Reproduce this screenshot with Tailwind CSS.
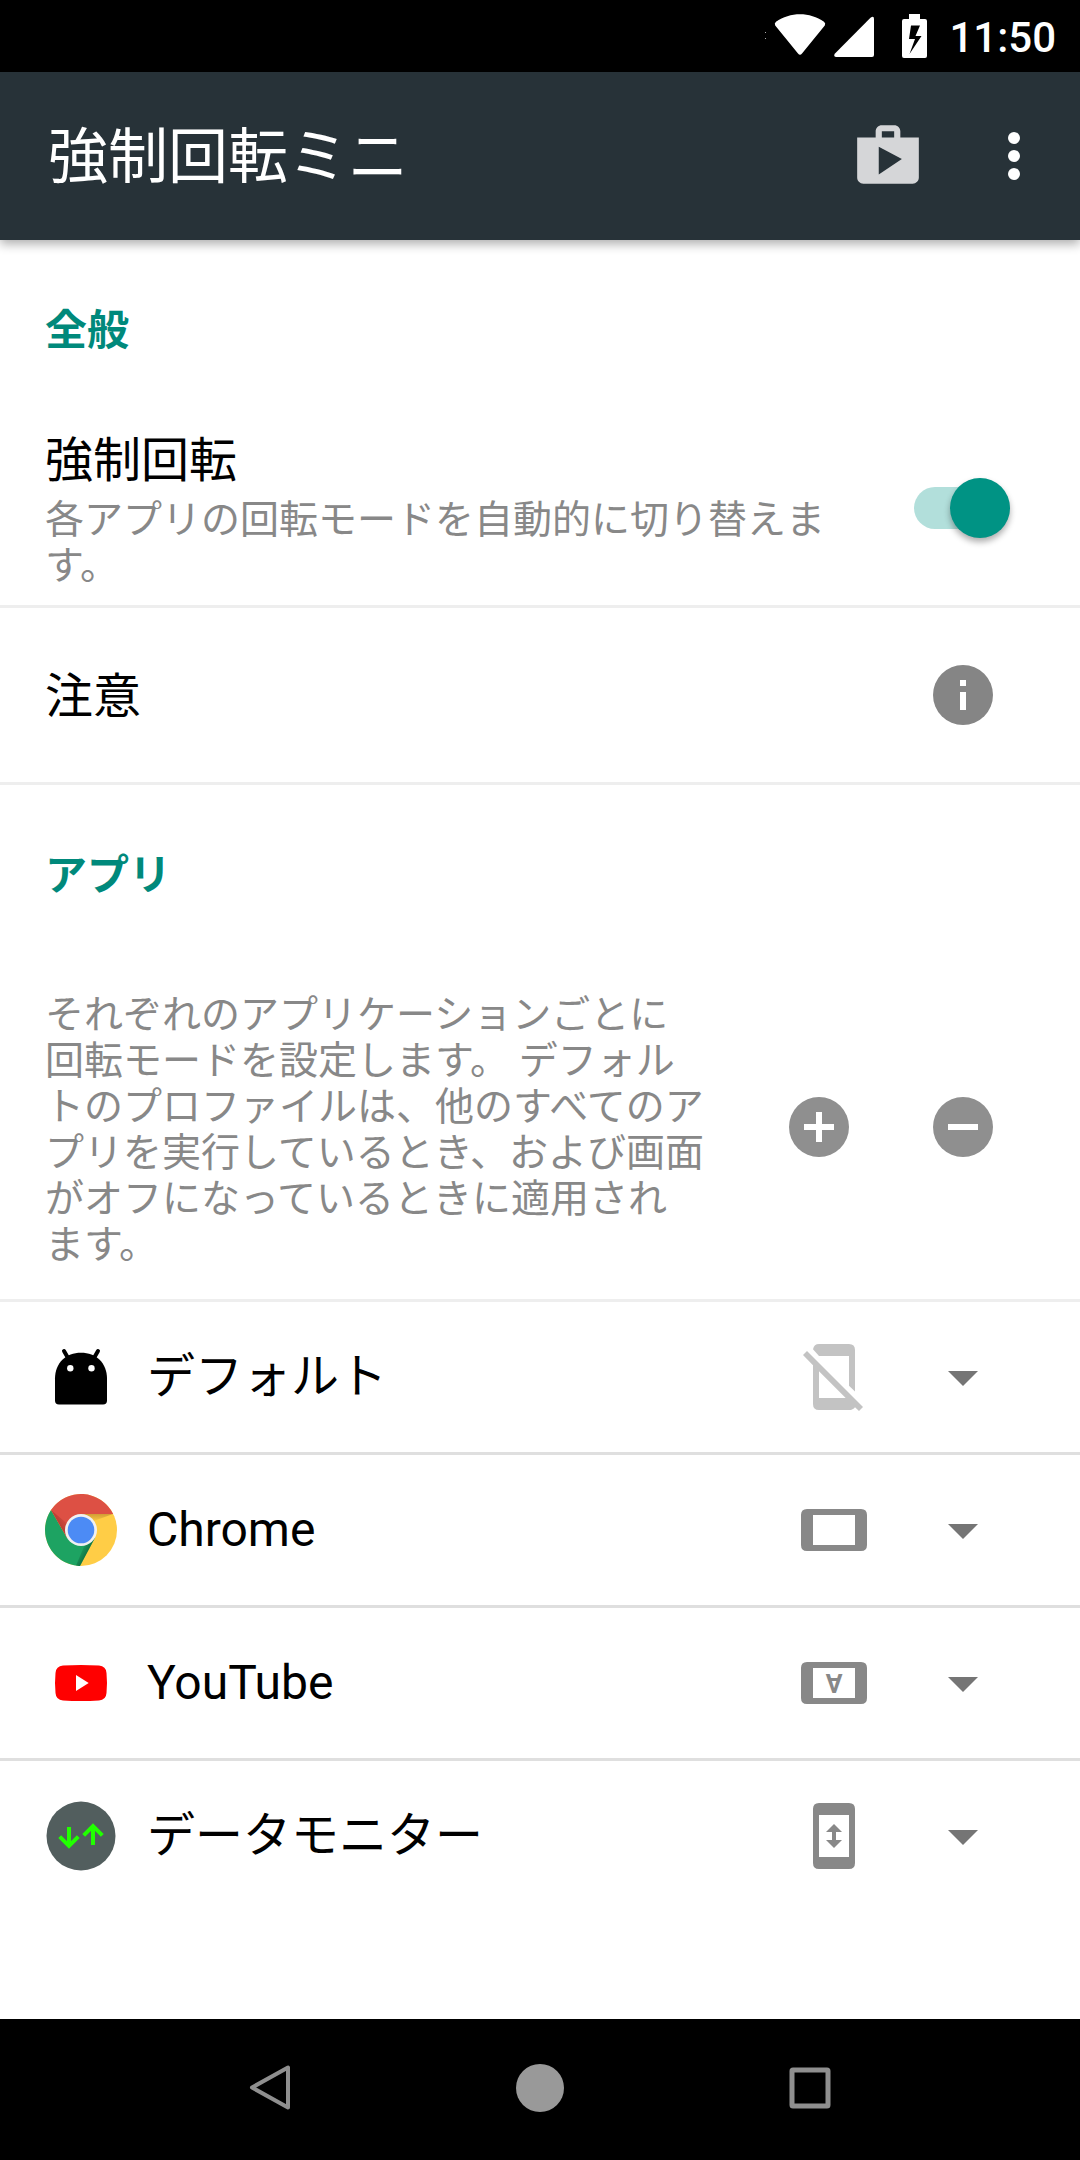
<!DOCTYPE html>
<html lang="ja">
<head>
<meta charset="utf-8">
<meta name="viewport" content="width=device-width, initial-scale=1">
<title>強制回転ミニ</title>
<script src="https://cdn.jsdelivr.net/npm/@tailwindcss/browser@4"></script>
</head>
<body class="flex min-h-screen flex-col bg-white font-[Roboto,'Noto_Sans_CJK_JP',sans-serif] text-black">

<!-- Status bar -->
<div class="flex h-18 shrink-0 items-center justify-end bg-black pr-6 text-white">
  <svg class="mr-2 h-18 w-[2px]" viewBox="0 0 2 72" fill="#aaa" aria-hidden="true"><path d="M1 32h1v1H1zM1 38h1v1H1z"/></svg>
  <svg class="mr-2 h-18 w-[52px]" viewBox="0 0 52 72" fill="#fff" aria-hidden="true"><path d="M1.200 25.500Q0 23.500 2 21.800C16 11.700 36 11.700 50 21.800Q52 23.500 50.800 25.500L28 53.500Q26 56 24 53.500Z"/></svg>
  <svg class="mr-7 h-18 w-10" viewBox="0 0 40 72" fill="#fff" aria-hidden="true"><path d="M1 53.500L36.500 17.700Q40 15.500 40 19V55Q40 57 38 57H2Q-1 56.500 1 53.500Z"/></svg>
  <svg class="mr-[22px] h-18 w-[25px]" viewBox="0 0 25 72" fill="#fff" aria-hidden="true"><path fill-rule="evenodd" d="M7 14H18V19H23Q25 19 25 21V56Q25 58 23 58H2Q0 58 0 56V21Q0 19 2 19H7ZM9 25.500L7 39H13L7.500 54L19.500 36H13.500L18 25.500Z"/></svg>
  <span class="pt-1 text-[42px] leading-[48px] font-medium">11:50</span>
</div>

<!-- App bar -->
<header class="z-10 flex h-42 shrink-0 items-center bg-[#273238] pr-[30px] pl-12 text-white shadow-[0_4px_10px_rgba(0,0,0,0.32)]">
  <h1 class="flex-1 pt-1 text-[60px] leading-[72px] font-normal">強制回転ミニ</h1>
  <button type="button" aria-label="ストア" class="mr-[53px]">
    <svg class="block size-[74px]" viewBox="0 0 24 24" fill="#d5d6d8"><path d="M16 6V4c0-1.110-.890-2-2-2h-4c-1.110 0-2 .890-2 2v2H2v13c0 1.110.890 2 2 2h16c1.110 0 2-.890 2-2V6h-6zm-6-2h4v2h-4V4zM9 18V9l7.500 4L9 18z"/></svg>
  </button>
  <button type="button" aria-label="メニュー">
    <svg class="block size-18" viewBox="0 0 72 72" fill="#fff"><circle cx="36" cy="18" r="6"/><circle cx="36" cy="36" r="6"/><circle cx="36" cy="54" r="6"/></svg>
  </button>
</header>

<main class="flex-1">
  <section>
    <h2 class="flex h-[170px] items-center px-[45px] pt-3 text-[42px] leading-[48px] font-bold text-[#00897b]">全般</h2>
    <div class="flex items-center border-b-3 border-[#eee] pr-[70px] pl-[45px]">
      <label for="force" class="flex-1 pt-[21px] pr-20 pb-4">
        <span class="block text-5xl leading-[60px]">強制回転</span>
        <span class="mt-1.5 block text-[39px] leading-[46px] text-[#888]">各アプリの回転モードを自動的に切り替えます。</span>
      </label>
      <input id="force" type="checkbox" role="switch" checked class="relative h-[42px] w-24 appearance-none rounded-full bg-[#b2dfdb] before:absolute before:-top-[9px] before:right-0 before:size-[60px] before:rounded-full before:bg-[#009384] before:shadow-[0_4px_6px_rgba(0,0,0,0.32)]">
    </div>
    <div class="flex h-[177px] items-center border-b-3 border-[#eee] pr-[81px] pl-[45px]">
      <span class="flex-1 pt-1 text-5xl leading-[60px]">注意</span>
      <button type="button" aria-label="注意">
        <svg class="block size-18" viewBox="0 0 72 72"><circle cx="36" cy="36" r="30" fill="#858585"/><path d="M33 21h6v6h-6zM33 33h6v18h-6z" fill="#fff"/></svg>
      </button>
    </div>
  </section>

  <section>
    <h2 class="flex h-[170px] items-center px-[45px] pt-3 text-[42px] leading-[48px] font-bold text-[#00897b]">アプリ</h2>
    <div class="flex h-[347px] items-center border-b-3 border-[#eee] pr-[81px] pl-[45px]">
      <p class="flex-1 pt-1.5 text-[39px] leading-[46px] text-[#888]">それぞれのアプリケーションごとに<br>回転モードを設定します。 デフォル<br>トのプロファイルは、他のすべてのア<br>プリを実行しているとき、および画面<br>がオフになっているときに適用され<br>ます。</p>
      <button type="button" aria-label="追加" class="mr-18">
        <svg class="block size-18" viewBox="0 0 72 72"><circle cx="36" cy="36" r="30" fill="#8f8f8f"/><path d="M33 21h6v12h12v6H39v12h-6V39H21v-6h12z" fill="#fff"/></svg>
      </button>
      <button type="button" aria-label="削除">
        <svg class="block size-18" viewBox="0 0 72 72"><circle cx="36" cy="36" r="30" fill="#8f8f8f"/><path d="M21 33h30v6H21z" fill="#fff"/></svg>
      </button>
    </div>

    <ul>
      <li class="flex items-center border-b-3 border-[#dfdfdf] pr-[81px] pl-[45px]">
        <svg class="size-18" viewBox="0 0 72 72" aria-hidden="true"><path d="M10 37.500C10 22 21 11.700 36 11.700S62 22 62 37.500V59.500Q62 63.500 58 63.500H14Q10 63.500 10 59.500Z"/><path d="M19 10l4 7M53 10l-4 7" stroke="#000" stroke-width="4" stroke-linecap="round"/><circle cx="25.300" cy="27.300" r="3.200" fill="#fff"/><circle cx="46.500" cy="27.300" r="3.200" fill="#fff"/></svg>
        <label for="mode-default" class="flex-1 pl-[30px] text-5xl leading-[60px]">デフォルト</label>
        <div class="grid h-[150px] grid-cols-[201px] items-center">
          <span class="col-start-1 row-start-1 flex justify-between">
            <svg class="size-18" viewBox="0 0 72 72" fill="#c3c3c3" aria-hidden="true"><path d="M15 8.300Q16 3 21 3H51Q57 3 57 9V50.500L51 44.700V15H21Z"/><path fill-rule="evenodd" d="M9 10L65 66L61 70L57 66.200Q55 69 51 69H21Q15 69 15 63V24.300L5 14ZM21 30.300V57H47.700Z"/></svg>
            <svg class="size-18" viewBox="0 0 72 72" fill="#757575" aria-hidden="true"><path d="M21 30H51L36 45Z"/></svg>
          </span>
          <select id="mode-default" class="col-start-1 row-start-1 h-full w-full appearance-none bg-transparent text-base text-transparent"><option></option></select>
        </div>
      </li>
      <li class="flex items-center border-b-3 border-[#dfdfdf] pr-[81px] pl-[45px]">
        <svg class="size-18" viewBox="0 0 72 72" aria-hidden="true">
          <defs>
            <linearGradient id="redShade" gradientUnits="userSpaceOnUse" x1="12" y1="33" x2="24" y2="26"><stop offset="0" stop-color="#8c2a22" stop-opacity=".6"/><stop offset="1" stop-color="#8c2a22" stop-opacity="0"/></linearGradient>
            <linearGradient id="yellowShade" gradientUnits="userSpaceOnUse" x1="50" y1="20" x2="50" y2="28"><stop offset="0" stop-color="#b9832b" stop-opacity=".65"/><stop offset="1" stop-color="#b9832b" stop-opacity="0"/></linearGradient>
            <linearGradient id="greenShade" gradientUnits="userSpaceOnUse" x1="42" y1="58" x2="35" y2="54"><stop offset="0" stop-color="#064d2c" stop-opacity=".5"/><stop offset="1" stop-color="#064d2c" stop-opacity="0"/></linearGradient>
          </defs>
          <circle cx="36" cy="36" r="36" fill="#ffcd46"/>
          <path d="M36 20H68L46 28Z" fill="url(#yellowShade)"/>
          <path d="M6 16.100A36 36 0 0 0 33.700 71.900L35 72L49.900 44L36 36L22.100 44Z" fill="#1da362"/>
          <path d="M49.900 44L35 72L31 71.600L40 50Z" fill="url(#greenShade)"/>
          <path d="M6 16.100A36 36 0 0 1 68.200 20H36L22.100 44Z" fill="#dd5044"/>
          <path d="M6 16.100L22.100 44L25 32Z" fill="url(#redShade)"/>
          <circle cx="36" cy="36" r="16" fill="#f1f1f1"/><circle cx="36" cy="36" r="13.300" fill="#4c8bf5"/>
        </svg>
        <label for="mode-chrome" class="flex-1 pl-[30px] text-5xl leading-[60px]">Chrome</label>
        <div class="grid h-[150px] grid-cols-[201px] items-center">
          <span class="col-start-1 row-start-1 flex justify-between">
            <svg class="size-18" viewBox="0 0 72 72" fill="#888" aria-hidden="true"><path fill-rule="evenodd" d="M9 15H63Q69 15 69 21V51Q69 57 63 57H9Q3 57 3 51V21Q3 15 9 15ZM15 21V51H57V21Z"/></svg>
            <svg class="size-18" viewBox="0 0 72 72" fill="#757575" aria-hidden="true"><path d="M21 30H51L36 45Z"/></svg>
          </span>
          <select id="mode-chrome" class="col-start-1 row-start-1 h-full w-full appearance-none bg-transparent text-base text-transparent"><option></option></select>
        </div>
      </li>
      <li class="flex items-center border-b-3 border-[#dfdfdf] pr-[81px] pl-[45px]">
        <svg class="size-18" viewBox="0 0 72 72" aria-hidden="true"><path d="M18 18.500Q36 17.500 54 18.500Q61 19 61.500 26Q62.500 36 61.500 46Q61 53 54 53.500Q36 54.500 18 53.500Q11 53 10.500 46Q9.500 36 10.500 26Q11 19 18 18.500Z" fill="red"/><path d="M31 28L43.700 36L31 44Z" fill="#fff"/></svg>
        <label for="mode-youtube" class="flex-1 pl-[30px] text-5xl leading-[60px]">YouTube</label>
        <div class="grid h-[150px] grid-cols-[201px] items-center">
          <span class="col-start-1 row-start-1 flex justify-between">
            <svg class="size-18" viewBox="0 0 72 72" fill="#888" aria-hidden="true"><path fill-rule="evenodd" d="M9 15H63Q69 15 69 21V51Q69 57 63 57H9Q3 57 3 51V21Q3 15 9 15ZM15 21V51H57V21Z"/><text x="36" y="45" text-anchor="middle" transform="rotate(180 36 36)" class="text-[25px] font-bold">A</text></svg>
            <svg class="size-18" viewBox="0 0 72 72" fill="#757575" aria-hidden="true"><path d="M21 30H51L36 45Z"/></svg>
          </span>
          <select id="mode-youtube" class="col-start-1 row-start-1 h-full w-full appearance-none bg-transparent text-base text-transparent"><option></option></select>
        </div>
      </li>
      <li class="flex items-center pr-[81px] pl-[45px]">
        <svg class="size-18" viewBox="0 0 72 72" fill="none" aria-hidden="true"><circle cx="36" cy="36" r="34.500" fill="#525e5e"/><path d="M24 27V46M14.700 36.700L24 46L33.300 36.700M48 45V26M38.700 35.300L48 26L57.300 35.300" stroke="#21ff00" stroke-width="4"/></svg>
        <label for="mode-monitor" class="flex-1 pl-[30px] text-5xl leading-[60px]">データモニター</label>
        <div class="grid h-[150px] grid-cols-[201px] items-center">
          <span class="col-start-1 row-start-1 flex justify-between">
            <svg class="size-18" viewBox="0 0 72 72" fill="#888" aria-hidden="true"><path fill-rule="evenodd" d="M21 3H51Q57 3 57 9V63Q57 69 51 69H21Q15 69 15 63V9Q15 3 21 3ZM21 15V57H51V15Z"/><path d="M36 24L44 32H38V40H44L36 48L28 40H34V32H28Z"/></svg>
            <svg class="size-18" viewBox="0 0 72 72" fill="#757575" aria-hidden="true"><path d="M21 30H51L36 45Z"/></svg>
          </span>
          <select id="mode-monitor" class="col-start-1 row-start-1 h-full w-full appearance-none bg-transparent text-base text-transparent"><option></option></select>
        </div>
      </li>
    </ul>
  </section>
</main>

<!-- System navigation -->
<nav class="flex h-[141px] shrink-0 justify-center bg-black pb-[3px]" aria-label="ナビゲーション">
  <button type="button" aria-label="戻る" class="flex w-1/4 items-center justify-center"><svg class="size-12" viewBox="0 0 48 48" fill="none" stroke="#8f8f8f" stroke-width="4" stroke-linejoin="round"><path d="M42 3.500V43.500L6 23.500Z"/></svg></button>
  <button type="button" aria-label="ホーム" class="flex w-1/4 items-center justify-center"><svg class="size-12" viewBox="0 0 48 48"><circle cx="24" cy="24" r="24" fill="#999"/></svg></button>
  <button type="button" aria-label="最近のアプリ" class="flex w-1/4 items-center justify-center"><svg class="size-12" viewBox="0 0 48 48" fill="none" stroke="#8f8f8f" stroke-width="5"><rect x="6" y="6" width="36" height="36" rx="1"/></svg></button>
</nav>
</body>
</html>
